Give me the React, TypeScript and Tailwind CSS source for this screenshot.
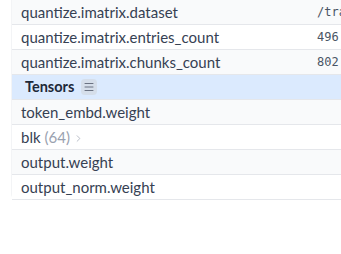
import { ChevronRight, Menu } from "lucide-react";

const meta = [
  { key: "quantize.imatrix.dataset", value: "/training_data/calibration_datav3.txt" },
  { key: "quantize.imatrix.entries_count", value: "496" },
  { key: "quantize.imatrix.chunks_count", value: "802" },
];

const tensors = ["token_embd.weight", "blk", "output.weight", "output_norm.weight"];

export default function App() {
  return (
    <div className="w-[341px] h-[254px] overflow-hidden bg-white" style={{ fontFamily: 'Lato, "Noto Sans", sans-serif' }}>
      <div className="ml-[11px] w-[420px] border-l border-gray-100 rounded-bl-md">
        {meta.map((m, i) => (
          <div
            key={m.key}
            className={`flex h-[25px] items-center border-b border-gray-200 ${i % 2 === 0 ? "bg-gray-50" : "bg-white"}`}
          >
            <div className="w-[305px] shrink-0 pl-[9px] text-[15px] text-gray-700 whitespace-nowrap">{m.key}</div>
            <div className="text-[12px] text-gray-600 whitespace-nowrap" style={{ fontFamily: '"DejaVu Sans Mono", monospace' }}>
              {m.value}
            </div>
          </div>
        ))}
        <div className="flex h-[25px] items-center border-b border-gray-200 bg-blue-100 pl-[13px]">
          <span className="text-[14.5px] font-bold text-gray-800">Tensors</span>
          <span className="ml-[7px] flex h-[16px] w-[16px] items-center justify-center rounded bg-gray-300/60">
            <Menu className="h-[12px] w-[12px] text-gray-500" strokeWidth={2} />
          </span>
        </div>
        {tensors.map((t, i) => (
          <div
            key={t}
            className={`flex h-[25px] items-center border-b border-gray-200 pl-[9px] text-[15px] text-gray-700 ${i % 2 === 0 ? "bg-gray-50" : "bg-white"}`}
          >
            {t === "blk" ? (
              <>
                <span>blk</span>
                <span className="ml-[4px] text-gray-400">(64)</span>
                <ChevronRight className="ml-[3px] mt-[2px] h-[11px] w-[11px] text-gray-400" strokeWidth={1.5} />
              </>
            ) : (
              t
            )}
          </div>
        ))}
      </div>
    </div>
  );
}
